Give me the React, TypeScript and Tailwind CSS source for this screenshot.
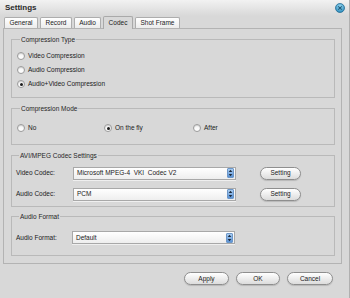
import React from "react";

const Radio = ({ label, checked }: { label: string; checked?: boolean }) => (
  <div className="flex items-center gap-[3px] h-[14px]">
    <span className="w-[8px] h-[8px] rounded-full border border-[#9c9c9c] bg-linear-to-b from-[#f4f4f4] to-white flex items-center justify-center shadow-[inset_0_1px_1px_rgba(0,0,0,0.15)]">
      {checked && <span className="w-[3px] h-[3px] rounded-full bg-[#1c1c1c]" />}
    </span>
    <span>{label}</span>
  </div>
);

const Stepper = () => (
  <span className="w-[7px] h-[10px] mr-[1px] rounded-[1px] bg-linear-to-b from-[#a9cdf2] to-[#5b93d6] border border-[#6d97c8] flex items-center justify-center">
    <svg width="5" height="8" viewBox="0 0 5 8">
      <path d="M2.5 0.8 L4.3 3 H0.7 Z" fill="#1d2a3a" />
      <path d="M2.5 7.2 L4.3 5 H0.7 Z" fill="#1d2a3a" />
    </svg>
  </span>
);

const Select = ({ value }: { value: string }) => (
  <div className="w-[163px] h-[13px] border border-[#a8a8a8] bg-linear-to-b from-white to-[#eeeeee] flex items-center pl-[3px] shadow-[0_1px_0_rgba(255,255,255,0.6)]">
    <span className="flex-1 whitespace-pre">{value}</span>
    <Stepper />
  </div>
);

const Pill = ({ label, w }: { label: string; w: string }) => (
  <div className={`${w} h-[13px] rounded-full border border-[#8e8e8e] bg-linear-to-b from-white to-[#dcdcdc] flex items-center justify-center shadow-[0_1px_1px_rgba(0,0,0,0.15)]`}>
    {label}
  </div>
);

const Group = ({ title, children, className }: { title: string; children: React.ReactNode; className: string }) => (
  <fieldset className={`border border-[#b9b9b9] ${className}`}>
    <legend className="ml-[3px] px-[1px] leading-[9px] text-[#262626]">{title}</legend>
    {children}
  </fieldset>
);

const tabs = [
  { name: "General", w: "w-[34px]" },
  { name: "Record", w: "w-[32px]" },
  { name: "Audio", w: "w-[27px]" },
  { name: "Codec", w: "w-[30px]" },
  { name: "Shot Frame", w: "w-[45px]" },
];

export default function App() {
  return (
    <div className="w-[350px] h-[298px] bg-[#d8d8d8] font-['Liberation_Sans',Arial,sans-serif] text-[6.5px] text-[#1a1a1a] overflow-hidden border-r border-[#b0b0b0]">
      {/* title bar */}
      <div className="h-[16px] flex items-center pl-[5px] pr-[4px] bg-linear-to-b from-[#f2f2f2] to-[#d8d8d8]">
        <span className="flex-1 text-[8px] font-bold text-[#2a2a2a]">Settings</span>
        <svg width="10" height="10" viewBox="0 0 10 10">
          <defs>
            <radialGradient id="cb" cx="0.5" cy="0.35" r="0.6">
              <stop offset="0" stopColor="#9fdcf5" />
              <stop offset="1" stopColor="#2f8fbf" />
            </radialGradient>
          </defs>
          <circle cx="5" cy="5" r="4.5" fill="url(#cb)" stroke="#2a6f94" strokeWidth="0.8" />
          <path d="M3.3 3.3 L6.7 6.7 M6.7 3.3 L3.3 6.7" stroke="#1f5876" strokeWidth="1.1" />
        </svg>
      </div>

      {/* tabs */}
      <div className="h-[13px] -mb-px pl-[4px] flex items-end gap-[2px]">
        {tabs.map((t) =>
          t.name === "Codec" ? (
            <div key={t.name} className={`${t.w} h-[13px] relative z-10 bg-[#d8d8d8] border border-b-0 border-[#a9a9a9] rounded-t-[2px] flex items-center justify-center`}>
              {t.name}
            </div>
          ) : (
            <div key={t.name} className={`${t.w} h-[11px] mb-[1px] bg-linear-to-b from-white to-[#ececec] border border-b-0 border-[#adadad] rounded-t-[2px] flex items-center justify-center`}>
              {t.name}
            </div>
          )
        )}
      </div>

      {/* panel */}
      <div className="ml-[3px] w-[339px] border border-[#b3b3b3] pt-[6px] pb-[7px] pl-[7px] pr-[6px] flex flex-col">
        <Group title="Compression Type" className="pt-[5px] pb-[6px] pl-[5px]">
          <Radio label="Video Compression" />
          <Radio label="Audio Compression" />
          <Radio label="Audio+Video Compression" checked />
        </Group>

        <Group title="Compression Mode" className="mt-[6px] pt-[8px] pb-[9px] pl-[5px]">
          <div className="grid grid-cols-[87px_89px_1fr]">
            <Radio label="No" />
            <Radio label="On the fly" checked />
            <Radio label="After" />
          </div>
        </Group>

        <Group title="AVI/MPEG Codec Settings" className="mt-[6px] pt-[6px] pb-[5px] pl-[4px]">
          <div className="flex flex-col gap-[7px]">
            <div className="flex items-center h-[14px]">
              <span className="w-[57px]">Video Codec:</span>
              <Select value="Microsoft MPEG-4  VKI  Codec V2" />
              <div className="ml-[24px]">
                <Pill label="Setting" w="w-[41px]" />
              </div>
            </div>
            <div className="flex items-center h-[14px]">
              <span className="w-[57px]">Audio Codec:</span>
              <Select value="PCM" />
              <div className="ml-[24px]">
                <Pill label="Setting" w="w-[41px]" />
              </div>
            </div>
          </div>
        </Group>

        <Group title="Audio Format" className="mt-[5px] pt-[10px] pb-[11px] pl-[4px]">
          <div className="flex items-center h-[13px]">
            <span className="w-[56px]">Audio Format:</span>
            <Select value="Default" />
          </div>
        </Group>
      </div>

      {/* bottom buttons */}
      <div className="mt-[8px] pr-[16px] flex justify-end gap-[7px]">
        <Pill label="Apply" w="w-[45px]" />
        <Pill label="OK" w="w-[44px]" />
        <Pill label="Cancel" w="w-[46px]" />
      </div>
    </div>
  );
}
